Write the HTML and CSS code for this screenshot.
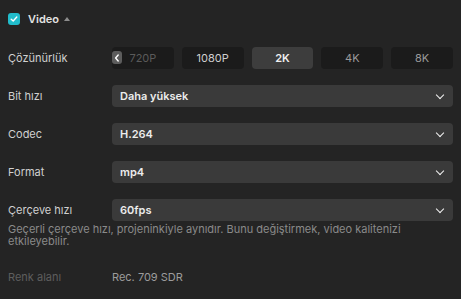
FILE: index.html
```html
<!DOCTYPE html>
<html lang="tr">
<head>
  <meta charset="UTF-8" />
  <title>Video</title>
  <link rel="stylesheet" href="styles.css">
</head>
<body>
  <div class="panel">
    <div class="header">
      <span class="check">
        <svg width="8" height="8" viewBox="0 0 8 8"><path d="M1.2 4.2 L3.2 6 L6.8 2" fill="none" stroke="#fff" stroke-width="1.4" stroke-linecap="round" stroke-linejoin="round"/></svg>
      </span>
      <span class="title">Video</span>
      <span class="caret"></span>
    </div>

    <div class="row">
      <label>Çözünürlük</label>
      <div class="seg">
        <div class="opt disabled">
          <span class="prev">
            <svg width="6" height="8" viewBox="0 0 6 8"><path d="M4.2 1 L1.6 4 L4.2 7" fill="none" stroke="#fff" stroke-width="1.4" stroke-linecap="round" stroke-linejoin="round"/></svg>
          </span>
          720P
        </div>
        <div class="opt">1080P</div>
        <div class="opt active">2K</div>
        <div class="opt dim">4K</div>
        <div class="opt dim">8K</div>
      </div>
    </div>

    <div class="row">
      <label>Bit hızı</label>
      <div class="select">Daha yüksek<span class="chev"></span></div>
    </div>

    <div class="row">
      <label>Codec</label>
      <div class="select">H.264<span class="chev"></span></div>
    </div>

    <div class="row">
      <label>Format</label>
      <div class="select">mp4<span class="chev"></span></div>
    </div>

    <div class="row">
      <label>Çerçeve hızı</label>
      <div class="select">60fps<span class="chev"></span></div>
    </div>
    <p class="hint">Geçerli çerçeve hızı, projeninkiyle aynıdır. Bunu değiştirmek, video kalitenizi etkileyebilir.</p>

    <div class="row plain">
      <label class="off">Renk alanı</label>
      <div class="value">Rec. 709 SDR</div>
    </div>
  </div>
</body>
</html>
```

FILE: styles.css
```css
html, body {
  margin: 0;
  background: #242424;
}
body {
  font-family: Inter, "Noto Sans", sans-serif;
  font-size: 11px;
  color: #d6d6d6;
}
.panel {
  padding: 10px 8px 0 8px;
}
.header {
  display: flex;
  align-items: center;
  height: 18px;
}
.check {
  width: 12px;
  height: 12px;
  border-radius: 3px;
  background: #21bccb;
  display: flex;
  align-items: center;
  justify-content: center;
}
.title {
  margin-left: 8px;
  font-weight: 600;
  font-size: 11px;
  color: #e2e2e2;
}
.caret {
  margin-left: 5px;
  width: 0;
  height: 0;
  border-left: 3.5px solid transparent;
  border-right: 3.5px solid transparent;
  border-bottom: 4px solid #8c8c8c;
}
.row {
  display: grid;
  grid-template-columns: 104px 1fr;
  align-items: center;
  height: 22px;
  margin-top: 16px;
}
.header + .row {
  margin-top: 19px;
}
label {
  color: #d0d0d0;
}
.seg {
  display: grid;
  grid-template-columns: repeat(5, 1fr);
  gap: 8px;
  height: 22px;
}
.opt {
  position: relative;
  background: #1b1b1b;
  border-radius: 4px;
  display: flex;
  align-items: center;
  justify-content: center;
  color: #cfcfcf;
}
.opt.active {
  background: #3d3d3d;
  color: #f0f0f0;
  font-weight: 600;
}
.opt.dim {
  color: #9a9a9a;
}
.opt.disabled {
  color: #5a5a5a;
}
.prev {
  position: absolute;
  left: 0;
  top: 4px;
  width: 10px;
  height: 13px;
  border-radius: 3px;
  background: #5c5c5c;
  display: flex;
  align-items: center;
  justify-content: center;
}
.select {
  height: 22px;
  background: #3a3a3a;
  border-radius: 4px;
  display: flex;
  align-items: center;
  justify-content: space-between;
  padding: 0 8px;
  font-weight: 600;
  color: #ececec;
}
.chev {
  width: 5px;
  height: 5px;
  border-right: 1.6px solid #f2f2f2;
  border-bottom: 1.6px solid #f2f2f2;
  transform: rotate(45deg);
  margin: -3px 2px 0 0;
}
.hint {
  margin: 2px 0 0 0;
  max-width: 410px;
  color: #8a8a8a;
  line-height: 12px;
}
.row.plain {
  margin-top: 19px;
}
label.off {
  color: #5e5e5e;
}
.value {
  color: #9c9c9c;
}
```
